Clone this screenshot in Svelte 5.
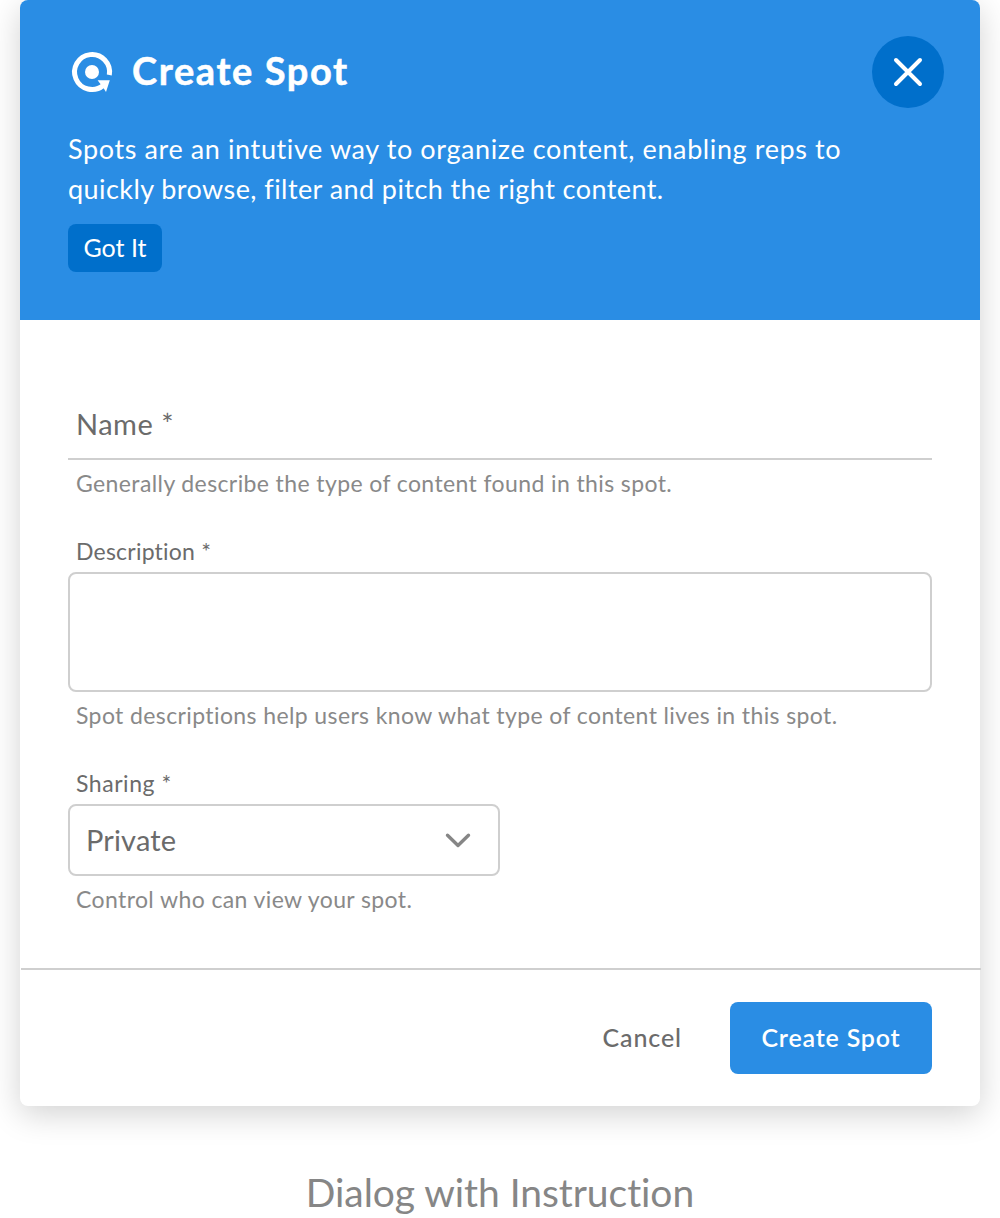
<script>
  let name = $state('');
  let description = $state('');
</script>

<main>
  <section class="dialog">
    <header>
      <div class="top">
        <svg class="logo" width="48" height="48" viewBox="0 0 48 48">
          <path d="M41.3 27 A17.5 17.5 0 1 0 35.2 37.5" fill="none" stroke="#fff" stroke-width="5" />
          <circle cx="24" cy="24" r="7" fill="#fff" />
          <path d="M29.6 32.2 H41.8 L38 44 L35.3 39.8 Z" fill="#fff" />
        </svg>
        <h1>Create Spot</h1>
        <button class="close" aria-label="Close">
          <svg width="36" height="36" viewBox="0 0 36 36">
            <path d="M6 6 L30 30 M30 6 L6 30" stroke="#fff" stroke-width="4" stroke-linecap="round" fill="none" />
          </svg>
        </button>
      </div>
      <p class="intro">
        <span class="l1">Spots are an intutive way to organize content, enabling reps to</span>
        <span class="l2">quickly browse, filter and pitch the right content.</span>
      </p>
      <button class="got">Got It</button>
    </header>

    <div class="body">
      <label class="name"><span>Name *</span><input bind:value={name} /></label>
      <p class="hint">Generally describe the type of content found in this spot.</p>

      <label class="label ld" for="desc">Description *</label>
      <textarea id="desc" bind:value={description}></textarea>
      <p class="hint">Spot descriptions help users know what type of content lives in this spot.</p>

      <span class="label ls">Sharing *</span>
      <div class="select">
        <span>Private</span>
        <svg width="28" height="20" viewBox="0 0 28 20">
          <path d="M3.5 5.3 L14 15.5 L24.5 5.3" fill="none" stroke="#868686" stroke-width="3.4" stroke-linecap="round" stroke-linejoin="round" />
        </svg>
      </div>
      <p class="hint">Control who can view your spot.</p>
    </div>

    <footer>
      <button class="cancel">Cancel</button>
      <button class="create">Create Spot</button>
    </footer>
  </section>
  <p class="caption">Dialog with Instruction</p>
</main>

<style>
  :global(body) {
    margin: 0;
    background: #fff;
  }
  main {
    width: 1000px;
    height: 1218px;
    overflow: hidden;
    font-family: Lato, 'Open Sans', sans-serif;
    font-variant-ligatures: none;
    color: #6b6b6b;
  }
  h1, p {
    margin: 0;
  }
  button {
    font: inherit;
    border: 0;
    padding: 0;
    white-space: nowrap;
  }
  .dialog {
    width: 960px;
    height: 1106px;
    margin: 0 auto;
    border-radius: 8px;
    background: #fff;
    box-shadow: 0 8px 32px rgba(0, 0, 0, 0.18);
    display: flex;
    flex-direction: column;
  }
  header {
    height: 320px;
    box-sizing: border-box;
    padding: 36px 36px 0 48px;
    border-radius: 8px 8px 0 0;
    background: #2a8de4;
    color: #fff;
  }
  .top {
    display: flex;
    align-items: center;
    height: 72px;
  }
  h1 {
    flex: 1;
    margin-left: 16px;
    padding-bottom: 4px;
    font-size: 38px;
    line-height: 48px;
    font-weight: 700;
    letter-spacing: 1.6px;
    -webkit-text-stroke: 0.5px #fff;
  }
  .close {
    width: 72px;
    height: 72px;
    border-radius: 50%;
    background: #006fcb;
    display: grid;
    place-items: center;
  }
  .intro {
    margin-top: 21px;
    font-size: 27px;
    line-height: 40px;
  }
  .intro span {
    display: block;
    white-space: nowrap;
  }
  .l1 { letter-spacing: 0.61px; }
  .l2 { letter-spacing: 0.43px; }
  .got {
    margin-top: 15px;
    padding-bottom: 2px;
    width: 94px;
    height: 48px;
    border-radius: 8px;
    background: #006fcb;
    color: #fff;
    font-size: 25px;
    letter-spacing: 0;
  }
  .body {
    flex: 1;
    padding: 64px 48px 0;
    display: flex;
    flex-direction: column;
  }
  .name {
    display: flex;
    height: 74px;
    border-bottom: 2px solid #cfcfcf;
    padding-left: 8px;
    font-size: 29px;
    line-height: 79px;
    letter-spacing: 0.5px;
  }
  .name input {
    flex: 1;
    border: 0;
    outline: 0;
    background: transparent;
  }
  .hint {
    margin: 7px 0 1px;
    padding-left: 8px;
    font-size: 23px;
    line-height: 32px;
    color: #898989;
    white-space: nowrap;
    letter-spacing: 0.39px;
  }
  .label {
    margin-top: 35px;
    padding-left: 8px;
    font-size: 23px;
    line-height: 32px;
  }
  .ld { letter-spacing: 0.22px; }
  .ls { letter-spacing: 0.55px; }
  textarea {
    height: 120px;
    margin: 5px 0 0;
    box-sizing: border-box;
    border: 2px solid #cfcfcf;
    border-radius: 8px;
    resize: none;
    outline: 0;
  }
  .select {
    width: 432px;
    height: 72px;
    margin-top: 5px;
    box-sizing: border-box;
    padding: 0 26px 0 16px;
    border: 2px solid #cfcfcf;
    border-radius: 8px;
    display: flex;
    align-items: center;
    justify-content: space-between;
    font-size: 29px;
    letter-spacing: 0.15px;
  }
  .select span {
    padding-bottom: 2px;
  }
  footer {
    height: 138px;
    box-sizing: border-box;
    margin: 0 -1px 0 1px;
    padding: 32px 49px 0 0;
    border-top: 2px solid #cfcfcf;
    display: flex;
    justify-content: flex-end;
    font-size: 25px;
  }
  .cancel {
    height: 72px;
    margin-right: 48px;
    padding-bottom: 2px;
    background: transparent;
    color: #6b6b6b;
    font-weight: 500;
    letter-spacing: 0.9px;
  }
  .create {
    width: 202px;
    height: 72px;
    padding-bottom: 2px;
    border-radius: 8px;
    background: #2a8de4;
    color: #fff;
    font-weight: 600;
    letter-spacing: 0.8px;
  }
  .caption {
    margin-top: 61px;
    text-align: center;
    font-size: 39px;
    line-height: 50px;
    color: #868686;
    letter-spacing: -0.05px;
  }
</style>
